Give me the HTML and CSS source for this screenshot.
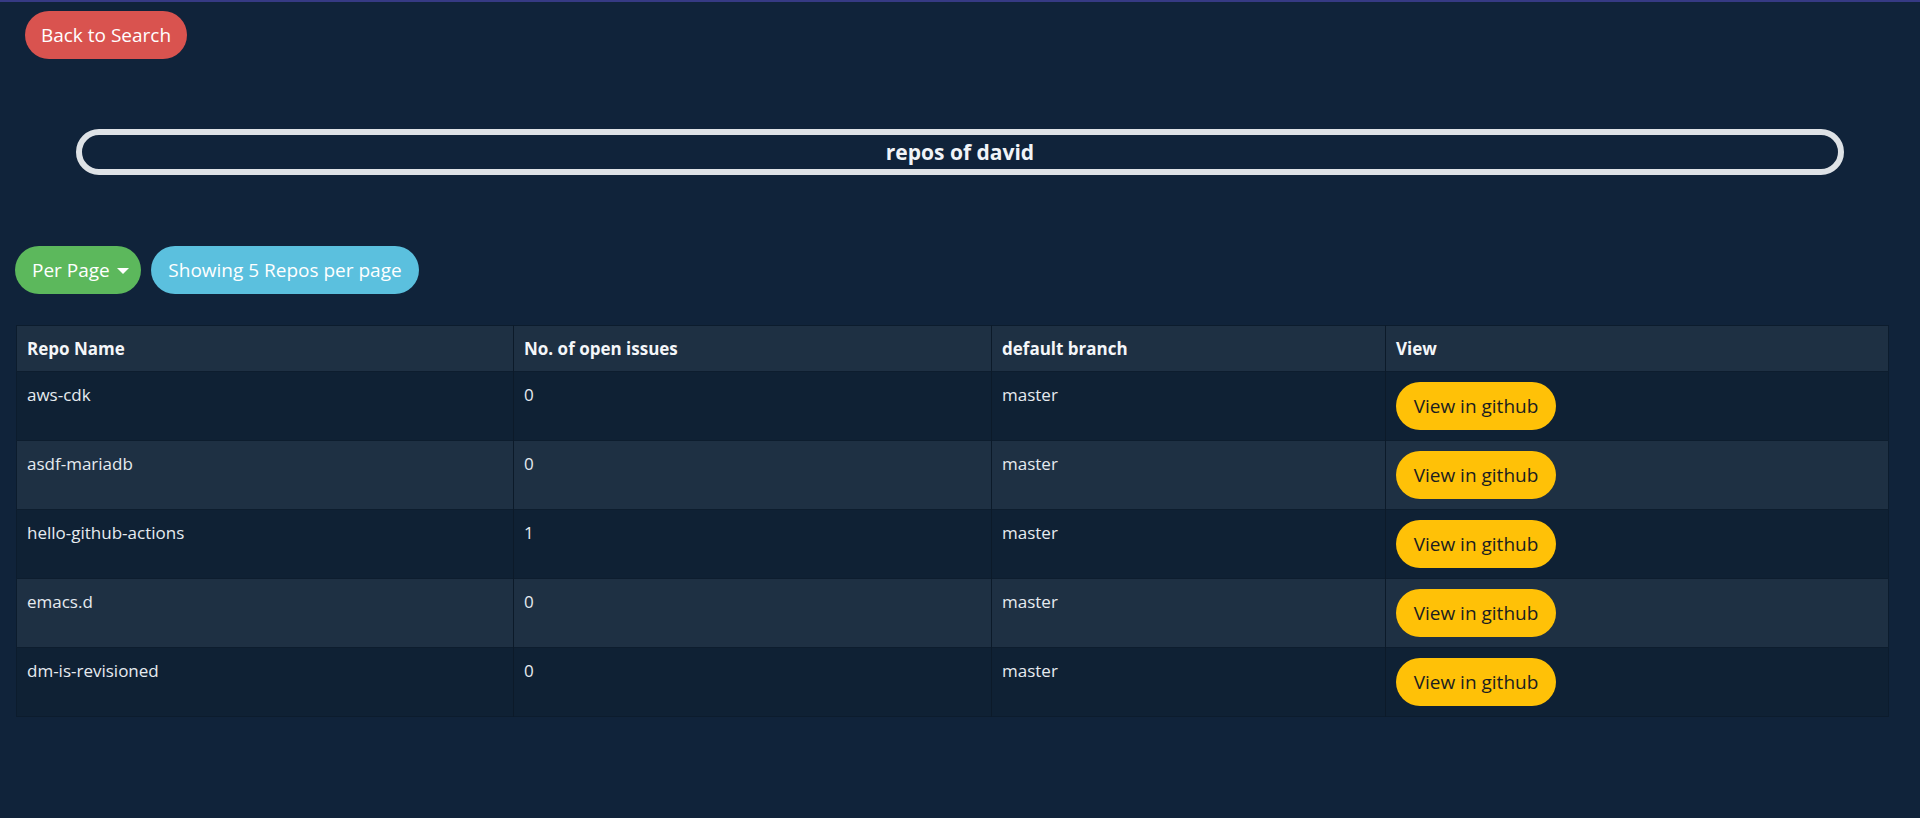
FILE: index.html
```html
<!DOCTYPE html>
<html lang="en">
<head>
<meta charset="utf-8">
<title>repos of david</title>
<link rel="stylesheet" href="styles.css">
</head>
<body>
<div class="top">
  <a class="btn btn-red" href="#">Back to Search</a>
</div>
<div class="title-box"><h1 class="title">repos of david</h1></div>
<div class="controls">
  <button class="btn btn-green">Per Page <span class="caret"></span></button>
  <span class="btn btn-blue">Showing 5 Repos per page</span>
</div>
<table class="repos">
  <thead>
    <tr><th class="c1">Repo Name</th><th class="c2">No. of open issues</th><th class="c3">default branch</th><th class="c4">View</th></tr>
  </thead>
  <tbody>
    <tr><td>aws-cdk</td><td>0</td><td>master</td><td><a class="btn btn-yellow" href="#">View in github</a></td></tr>
    <tr><td>asdf-mariadb</td><td>0</td><td>master</td><td><a class="btn btn-yellow" href="#">View in github</a></td></tr>
    <tr><td>hello-github-actions</td><td>1</td><td>master</td><td><a class="btn btn-yellow" href="#">View in github</a></td></tr>
    <tr><td>emacs.d</td><td>0</td><td>master</td><td><a class="btn btn-yellow" href="#">View in github</a></td></tr>
    <tr><td>dm-is-revisioned</td><td>0</td><td>master</td><td><a class="btn btn-yellow" href="#">View in github</a></td></tr>
  </tbody>
</table>
</body>
</html>
```

FILE: styles.css
```css
html, body {
  margin: 0;
  padding: 0;
}
body {
  background: #10233a;
  border-top: 2px solid #363a84;
  font-family: "Open Sans", "Noto Sans", sans-serif;
  color: #e9edf2;
  min-height: 816px;
}
.top {
  padding: 9px 25px 0;
}
.btn {
  display: inline-flex;
  align-items: center;
  box-sizing: border-box;
  height: 48px;
  padding: 0 16px;
  border: 1px solid transparent;
  border-radius: 999px;
  font-family: "Open Sans", "Noto Sans", sans-serif;
  font-size: 19px;
  line-height: 30px;
  text-decoration: none;
  color: #fff;
  cursor: pointer;
}
.btn-red {
  background: #d9534f;
  width: 162px;
  justify-content: center;
  padding: 0;
}
.title-box {
  margin: 70px 76px 0;
  height: 46px;
  box-sizing: border-box;
  border: 6px solid #dee2e6;
  border-radius: 999px;
  display: flex;
  align-items: center;
  justify-content: center;
}
.title {
  margin: 0;
  font-size: 21px;
  font-weight: 700;
  color: #f1f4f8;
  line-height: 1;
}
.controls {
  margin-top: 71px;
  padding-left: 15px;
  display: flex;
  gap: 10px;
}
.btn-green {
  background: #5cb85c;
  width: 126px;
  padding: 0 0 0 16px;
}
.caret {
  display: inline-block;
  margin-left: 7px;
  margin-top: 2px;
  border-top: 6px solid #fff;
  border-left: 6px solid transparent;
  border-right: 6px solid transparent;
}
.btn-blue {
  background: #5bc0de;
  width: 268px;
  justify-content: center;
  padding: 0;
}
.repos {
  margin: 31px 0 0 16px;
  width: 1873px;
  border-collapse: collapse;
  table-layout: fixed;
  border: 1px solid #0c1c2d;
  font-size: 17px;
}
.repos th, .repos td {
  text-align: left;
  vertical-align: top;
  padding: 10px 10px;
  line-height: 25px;
  border-left: 1px solid #0c1a29;
}
.repos th:first-child, .repos td:first-child {
  border-left: none;
}
.repos th {
  font-weight: 700;
  color: #f4f6f9;
  background: #1e3043;
  height: 25px;
}
.repos tbody tr {
  border-top: 1px solid #0d1d2e;
}
.repos tbody td {
  height: 48px;
  color: #e6ebf0;
}
.repos tbody tr:nth-child(odd) td {
  background: #0f2134;
}
.repos tbody tr:nth-child(even) td {
  background: #1e3043;
}
.c1 { width: 476px; }
.c2 { width: 457px; }
.c3 { width: 373px; }
.c4 { width: auto; }
.btn-yellow {
  background: #ffc107;
  color: #1b1d20;
  width: 160px;
  justify-content: center;
  padding: 0;
}
```
